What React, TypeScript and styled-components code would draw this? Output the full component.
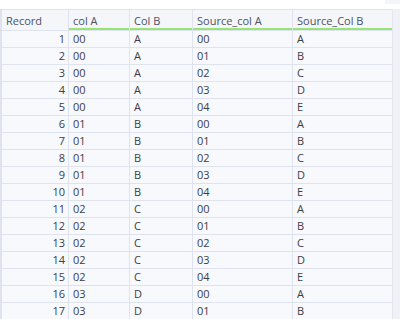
import React from 'react';
import styled, {createGlobalStyle} from 'styled-components';

const GlobalStyle = createGlobalStyle`
    html, body {
        margin: 0;
        padding: 0;
        background: #ffffff;
    }
    body {
        font-family: "Open Sans", "Noto Sans", sans-serif;
    }
`;

const Page = styled.div`
    width: 400px;
    height: 319px;
    overflow: hidden;
    display: flex;
    flex-direction: column;
    background: #ffffff;
`;

const TopStrip = styled.div`
    height: 9px;
    flex: 0 0 9px;
    display: flex;
    justify-content: flex-end;
`;

const CornerBox = styled.div`
    width: 15px;
    height: 4px;
    background: #f4f5f9;
`;

const Body = styled.div`
    flex: 1;
    display: flex;
    min-height: 0;
`;

const Grid = styled.div`
    display: grid;
    grid-template-columns: 66px 60px 62px 99px 99px;
    grid-auto-rows: 17px;
    grid-template-rows: 21px;
    border-left: 2px solid #dfe3ed;
    background: #dfe3ed;
    column-gap: 1px;
    row-gap: 0;
    align-content: start;
`;

const Gutter = styled.div`
    flex: 1;
    background: #eff1f7;
    border-left: 1px solid #e3e6ee;
`;

const HeaderCell = styled.div<{$accent?: boolean}>`
    background: #f4f6fa;
    color: #4b5366;
    font-size: 11px;
    line-height: 17px;
    padding: 2px 4px 0 4px;
    border-top: 1px solid #dfe3ed;
    border-bottom: 2px solid ${(p) => (p.$accent ? '#98e27a' : '#f4f6fa')};
    box-shadow: inset 0 -1px 0 0 #f4f6fa;
    white-space: nowrap;
    overflow: hidden;
`;

const Cell = styled.div<{$right?: boolean}>`
    background: #f8f9fd;
    color: #3a3d46;
    font-size: 11px;
    line-height: 16px;
    border-top: 1px solid #dfe3ed;
    padding: 0 ${(p) => (p.$right ? '3px' : '4px')} 0 4px;
    text-align: ${(p) => (p.$right ? 'right' : 'left')};
    white-space: nowrap;
    overflow: hidden;
`;

const columns = ['col A', 'Col B', 'Source_col A', 'Source_Col B'];

const letters = ['A', 'B', 'C', 'D', 'E'];

const rows = Array.from({length: 17}, (_, i) => {
    const a = Math.floor(i / 5);
    const s = i % 5;
    return {
        record: i + 1,
        colA: '0' + a,
        colB: letters[a],
        srcA: '0' + s,
        srcB: letters[s],
    };
});

const App = () => {
    return (
        <>
            <GlobalStyle/>
            <Page>
                <TopStrip>
                    <CornerBox/>
                </TopStrip>
                <Body>
                    <Grid>
                        <HeaderCell>{'Record'}</HeaderCell>
                        {columns.map((c) => (
                            <HeaderCell
                                key={c}
                                $accent={true}
                            >
                                {c}
                            </HeaderCell>
                        ))}
                        {rows.map((r) => (
                            <React.Fragment key={r.record}>
                                <Cell $right={true}>{r.record}</Cell>
                                <Cell>{r.colA}</Cell>
                                <Cell>{r.colB}</Cell>
                                <Cell>{r.srcA}</Cell>
                                <Cell>{r.srcB}</Cell>
                            </React.Fragment>
                        ))}
                    </Grid>
                    <Gutter/>
                </Body>
            </Page>
        </>
    );
};

export default App;
